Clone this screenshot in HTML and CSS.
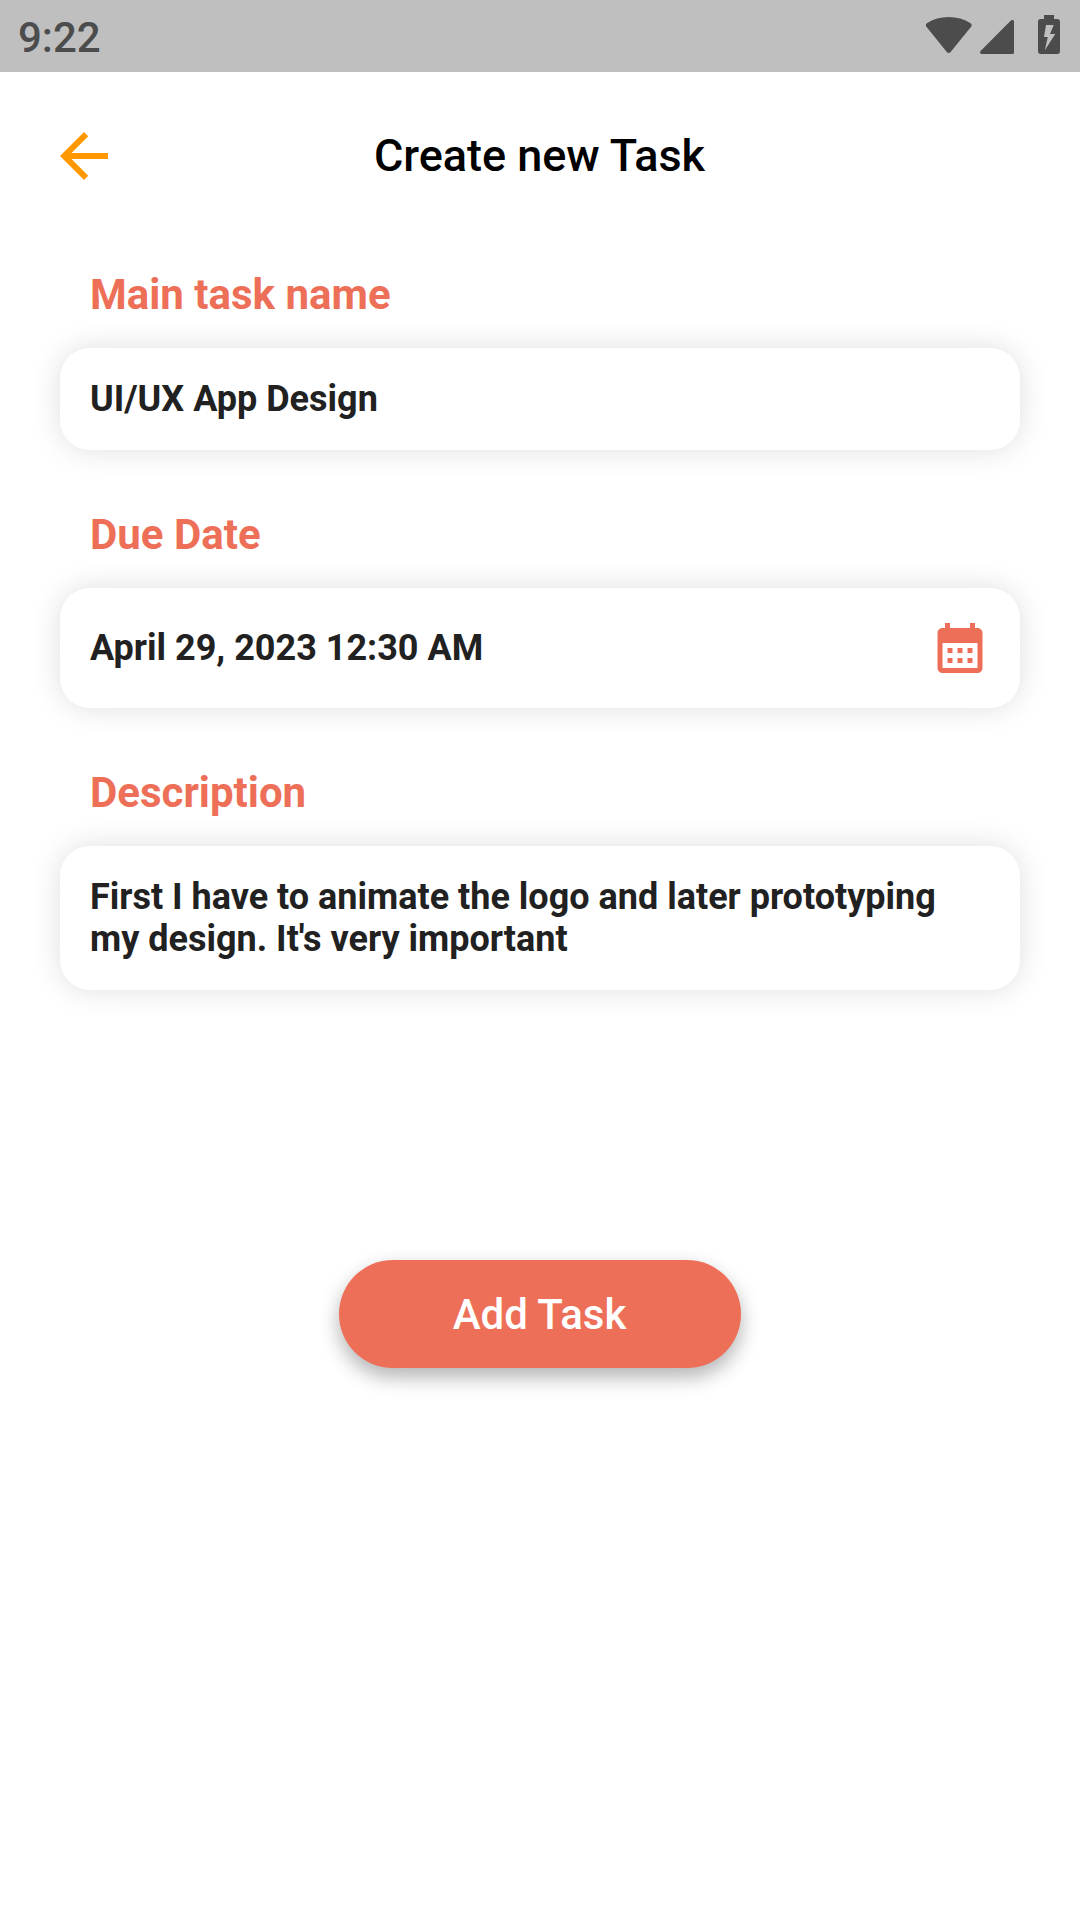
FILE: index.html
```html
<!DOCTYPE html>
<html lang="en">
<head>
<meta charset="utf-8">
<title>Create new Task</title>
<link rel="stylesheet" href="styles.css">
</head>
<body>
<div class="status-bar">
  <span class="clock">9:22</span>
  <svg class="status-icons" width="136" height="42" viewBox="0 0 136 42">
    <path d="M2.900 8.300C9.200 4.200 16.700 2 24.700 2s15.600 2.200 21.900 6.300c1.200.9 1.400 2.200.5 3.400L26.600 37c-1 1.200-2.800 1.200-3.800 0L2.400 11.700c-.9-1.200-.7-2.500.5-3.400z"/>
    <path d="M86.400 5.900 56.600 36.100c-1.100 1.100-.7 2.900 1 2.900H88.500c.9 0 1.500-.6 1.500-1.500V6.500c0-1.700-2.200-2.200-3.600-.6z"/>
    <path fill-rule="evenodd" d="M120 0h10v4h3.500c1.400 0 2.500 1.100 2.500 2.500v30c0 1.400-1.100 2.500-2.500 2.500h-17c-1.400 0-2.500-1.100-2.500-2.500v-30c0-1.400 1.100-2.500 2.500-2.500h3.500zM122 10l-2 12h3.800L120.800 35.200 131.300 19H126l3.700-9z"/>
  </svg>
</div>
<header class="app-bar">
  <svg class="back" viewBox="0 0 24 24"><path d="M20 11H7.830l5.590-5.590L12 4l-8 8 8 8 1.410-1.410L7.830 13H20v-2z"/></svg>
  <h1 class="title">Create new Task</h1>
</header>
<main class="form">
  <section class="group">
    <h2 class="label">Main task name</h2>
    <div class="field">UI/UX App Design</div>
  </section>
  <section class="group">
    <h2 class="label">Due Date</h2>
    <div class="field field-date">
      <span>April 29, 2023 12:30 AM</span>
      <svg class="calendar" viewBox="0 0 24 24"><path d="M19 4h-1V2h-2v2H8V2H6v2H5c-1.110 0-1.990.9-1.990 2L3 20c0 1.100.89 2 2 2h14c1.100 0 2-.9 2-2V6c0-1.100-.9-2-2-2zm0 16H5V10h14v10zM9 14H7v-2h2v2zm4 0h-2v-2h2v2zm4 0h-2v-2h2v2zM9 18H7v-2h2v2zm4 0h-2v-2h2v2zm4 0h-2v-2h2v2z"/></svg>
    </div>
  </section>
  <section class="group">
    <h2 class="label">Description</h2>
    <div class="field field-text">First I have to animate the logo and later prototyping my design. It's very important</div>
  </section>
  <button class="submit" type="button">Add Task</button>
</main>
</body>
</html>
```
FILE: styles.css
```css
* {
  box-sizing: border-box;
}

body {
  margin: 0;
  height: 1920px;
  overflow: hidden;
  background: #fff;
  font-family: Roboto, sans-serif;
}

.status-bar {
  display: flex;
  justify-content: space-between;
  align-items: flex-start;
  height: 72px;
  padding: 12px 20px 0 18px;
  background: #bfbfbf;
  color: #4c4c4c;
}

.clock {
  font-size: 42px;
  font-weight: 500;
  line-height: 51px;
}

.status-icons {
  margin-top: 3px;
  fill: #4c4c4c;
}

.app-bar {
  display: grid;
  grid-template-columns: 72px 1fr 72px;
  align-items: center;
  height: 168px;
  padding: 0 49px 0 48px;
}

.back {
  width: 72px;
  height: 72px;
  fill: #ff9800;
}

.title {
  margin: 0;
  padding-bottom: 2px;
  color: #000;
  font-size: 45px;
  font-weight: 500;
  line-height: 53px;
  letter-spacing: -0.03px;
  text-align: center;
}

.form {
  display: flex;
  flex-direction: column;
  gap: 60px;
  padding: 30px 60px 0;
}

.label {
  margin: 0 0 29px 30px;
  color: #ee6f57;
  font-size: 42px;
  font-weight: 700;
  line-height: 49px;
}

.field {
  display: flex;
  justify-content: space-between;
  align-items: center;
  height: 102px;
  padding: 0 30px;
  border-radius: 30px;
  background: #fff;
  box-shadow: 0 0 30px rgba(0, 0, 0, 0.13);
  color: #212121;
  font-size: 36px;
  font-weight: 700;
  line-height: 42px;
}

.field-date {
  height: 120px;
}

.field-text {
  align-items: flex-start;
  height: 144px;
  padding-top: 30px;
}

.calendar {
  width: 60px;
  height: 60px;
  fill: #ee6f57;
}

.submit {
  align-self: center;
  width: 402px;
  height: 108px;
  margin-top: 210px;
  padding: 0 1px 0 0;
  border: 0;
  border-radius: 54px;
  background: #ee6f57;
  box-shadow: 0 9px 20px rgba(0, 0, 0, 0.3);
  color: #fff;
  font-family: inherit;
  font-size: 42px;
  font-weight: 500;
  line-height: 49px;
}
```
